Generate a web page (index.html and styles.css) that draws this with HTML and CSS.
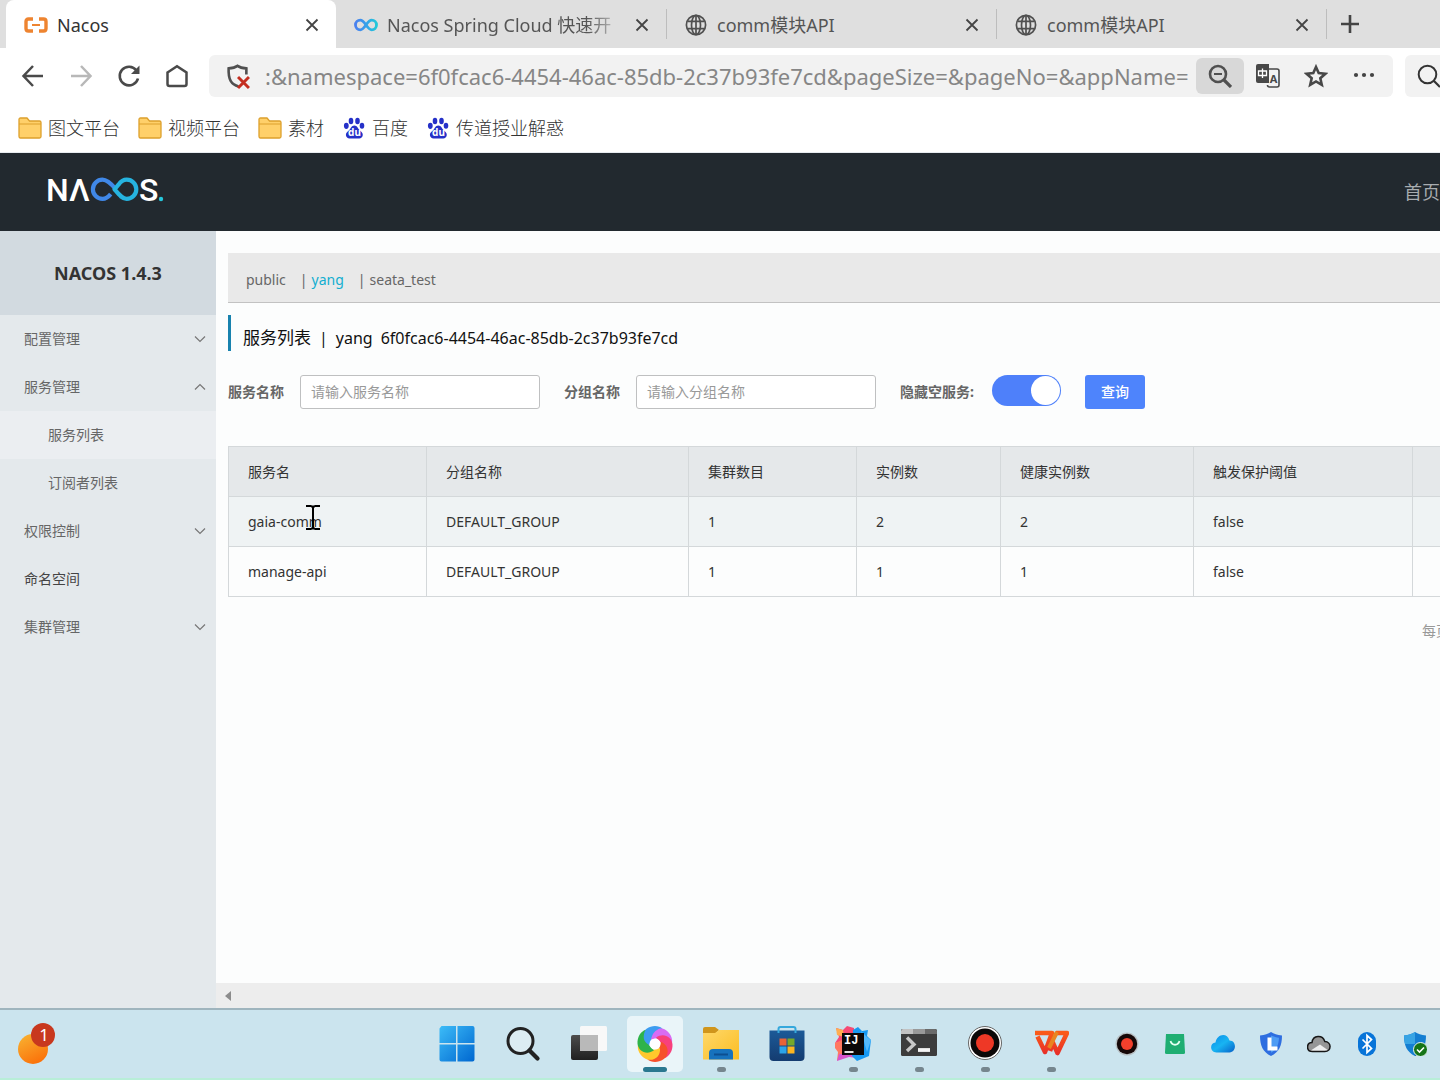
FILE: index.html
```html
<!DOCTYPE html>
<html lang="zh-CN">
<head>
<meta charset="utf-8">
<title>Nacos</title>
<link rel="stylesheet" href="styles.css">
</head>
<body>
<svg class="defs" aria-hidden="true">
  <defs>
    <linearGradient id="loop" x1="0" x2="1" y1="0" y2="0"><stop offset="0" stop-color="#4a80ee"/><stop offset=".5" stop-color="#35a0ea"/><stop offset="1" stop-color="#22c8d8"/></linearGradient>
    <linearGradient id="win" x1="0" x2="1" y1="0" y2="1"><stop offset="0" stop-color="#3cbcf8"/><stop offset="1" stop-color="#0067d0"/></linearGradient>
    <linearGradient id="sun" x1=".2" x2=".7" y1="0" y2="1"><stop offset="0" stop-color="#f8b030"/><stop offset="1" stop-color="#fb6f08"/></linearGradient>
    <linearGradient id="gold" x1="0" x2="1" y1="0" y2="1"><stop offset="0" stop-color="#ffd86a"/><stop offset="1" stop-color="#fbbd22"/></linearGradient>
    <linearGradient id="dark" x1="0" x2="0" y1="0" y2="1"><stop offset="0" stop-color="#4c4c4c"/><stop offset="1" stop-color="#202020"/></linearGradient>
    <linearGradient id="bag" x1="0" x2="0" y1="0" y2="1"><stop offset="0" stop-color="#1c5a98"/><stop offset="1" stop-color="#143c70"/></linearGradient>
    <linearGradient id="sky" x1="0" x2="1" y1="0" y2="1"><stop offset="0" stop-color="#0a8ae8"/><stop offset=".5" stop-color="#18b4f2"/><stop offset="1" stop-color="#0860c8"/></linearGradient>
    <linearGradient id="wps" x1="0" x2="0" y1="0" y2="1"><stop offset="0" stop-color="#fa5a18"/><stop offset="1" stop-color="#e83028"/></linearGradient>
    <symbol id="close" viewBox="0 0 14 14"><path d="M1.500 1.500l11 11M12.500 1.500l-11 11" stroke="#444" stroke-width="1.800" fill="none"/></symbol>
    <symbol id="globe" viewBox="0 0 22 22"><g fill="none" stroke="#505050" stroke-width="1.700"><circle cx="11" cy="11" r="9.600"/><ellipse cx="11" cy="11" rx="4.500" ry="9.600"/><path d="M11 1.400v19.200M2.500 7.300h17M2.500 14.700h17"/></g></symbol>
    <symbol id="folder" viewBox="0 0 24 22"><path d="M1 19V2.500Q1 1 2.500 1H9l2.500 3H21.500Q23 4 23 5.500V19.500Q23 21 21.500 21H2.500Q1 21 1 19z" fill="#ffd06a" stroke="#dda02c" stroke-width="1.300"/><path d="M1 7h22" stroke="#dda02c"/></symbol>
    <symbol id="paw" viewBox="0 0 22 22"><g fill="#2530c8"><ellipse cx="8" cy="4" rx="2.300" ry="3.200"/><ellipse cx="14.500" cy="4" rx="2.300" ry="3.200"/><ellipse cx="3.300" cy="8.800" rx="2.400" ry="3.100"/><ellipse cx="19" cy="8.800" rx="2.300" ry="3"/><path d="M11.300 8.500c3 0 3.500 3 5.700 5 2 1.800 3.500 3.200 2.400 6-1.200 2.600-4.400 2-8 2s-7 .6-8.100-2c-1.200-2.800.5-4.300 2.500-6 2.100-1.900 2.600-5 5.500-5z"/></g><text x="11.500" y="19" text-anchor="middle" class="paw-text">du</text></symbol>
    <symbol id="down" viewBox="0 0 12 8"><path d="M1 1.500l5 5 5-5" fill="none" stroke="#777" stroke-width="1.200"/></symbol>
    <symbol id="up" viewBox="0 0 12 8"><path d="M1 6.500l5-5 5 5" fill="none" stroke="#777" stroke-width="1.200"/></symbol>
    <path id="blade" d="M-5-4C-6-13 2-18 9-15 15-12 18-6 17-1 13-7 8-9 3-6z"/>
  </defs>
</svg>

<div class="tabstrip">
  <div class="tab tab-active">
    <svg class="tab-icon" viewBox="0 0 24 18"><path d="M9 3H4.500Q2 3 2 5.500v7Q2 15 4.500 15H9M15 3h4.500Q22 3 22 5.500v7Q22 15 19.500 15H15" fill="none" stroke="#ee8430" stroke-width="3.400"/><path d="M8 9h8" stroke="#ee8430" stroke-width="2"/></svg>
    <span class="tab-title">Nacos</span>
    <button class="tab-close" aria-label="关闭"><svg><use href="#close"/></svg></button>
  </div>
  <div class="tab">
    <svg class="tab-icon" viewBox="0 0 24 18"><path d="M12 9C9.500 5.500 8.500 4.200 6.300 4.200a4.800 4.800 0 0 0 0 9.600C8.500 13.800 9.500 12.500 12 9s3.500-4.800 5.700-4.800a4.800 4.800 0 0 1 0 9.600C15.500 13.800 14.500 12.500 12 9z" fill="none" stroke="url(#loop)" stroke-width="2.800"/></svg>
    <span class="tab-title tab-fade">Nacos Spring Cloud 快速开</span>
    <button class="tab-close" aria-label="关闭"><svg><use href="#close"/></svg></button>
  </div>
  <div class="tab tab-line">
    <svg class="tab-icon globe"><use href="#globe"/></svg>
    <span class="tab-title">comm模块API</span>
    <button class="tab-close" aria-label="关闭"><svg><use href="#close"/></svg></button>
  </div>
  <div class="tab tab-line">
    <svg class="tab-icon globe"><use href="#globe"/></svg>
    <span class="tab-title">comm模块API</span>
    <button class="tab-close" aria-label="关闭"><svg><use href="#close"/></svg></button>
  </div>
  <button class="tab-new tab-line" aria-label="新建标签页"><svg viewBox="0 0 20 20"><path d="M10 1v18M1 10h18" stroke="#444" stroke-width="2.600"/></svg></button>
</div>

<div class="toolbar">
  <button class="tool" aria-label="后退"><svg viewBox="0 0 24 24"><path d="M22 12H3M12 2L2.500 12 12 22" fill="none" stroke="#4a4a4a" stroke-width="2.500"/></svg></button>
  <button class="tool" aria-label="前进"><svg viewBox="0 0 24 24"><path d="M2 12h19M12 2l9.500 10L12 22" fill="none" stroke="#b8b8b8" stroke-width="2.500"/></svg></button>
  <button class="tool" aria-label="刷新"><svg viewBox="0 0 24 24"><path d="M19.500 6.500A9.300 9.300 0 1 0 21 14.500" fill="none" stroke="#4a4a4a" stroke-width="2.600"/><path d="M22.500 1.500V10H14z" fill="#4a4a4a"/></svg></button>
  <button class="tool" aria-label="主页"><svg viewBox="0 0 24 24"><path d="M2.500 8.500L12 2.200l9.500 6.300V20q0 2-2 2h-15q-2 0-2-2z" fill="none" stroke="#4a4a4a" stroke-width="2.500"/></svg></button>
  <div class="address">
    <svg class="shield" viewBox="0 0 24 24"><path d="M13 21.500C6 19.500 3 15 3.500 4.200 8 4 10 3.300 12 1.800c2 1.500 4 2.200 8.500 2.400V10" fill="none" stroke="#505050" stroke-width="2.500"/><path d="M12.500 12.500l10.500 10.500M23 12.500L12.500 23" stroke="#c42e20" stroke-width="2.800"/></svg>
    <input class="url" type="text" aria-label="地址" value=":&amp;namespace=6f0fcac6-4454-46ac-85db-2c37b93fe7cd&amp;pageSize=&amp;pageNo=&amp;appName=">
    <button class="tool tool-on" aria-label="缩放"><svg viewBox="0 0 24 24"><circle cx="10" cy="10" r="8" fill="none" stroke="#505050" stroke-width="2.600"/><path d="M6 10h8" stroke="#505050" stroke-width="2"/><path d="M16 16l7 7" stroke="#505050" stroke-width="3.200"/></svg></button>
    <button class="tool" aria-label="翻译"><svg viewBox="0 0 24 24"><rect x="0" y="0" width="13" height="19" rx="2" fill="#484848"/><path d="M11.500 5H21q2 0 2 2v14q0 2-2 2h-7.500q-2 0-2-2" fill="#f2f2f2" stroke="#484848" stroke-width="1.600"/><path d="M11.500 0v19" stroke="#484848" stroke-width="3"/><path d="M2.500 7h8v4.500h-8zM6.500 4.500V14" fill="none" stroke="#fff" stroke-width="1.300"/><text x="17.500" y="19" text-anchor="middle" class="translate-text">A</text></svg></button>
    <button class="tool" aria-label="收藏"><svg viewBox="0 0 24 24"><path d="M12 3l2.700 6.100 6.600.7-5 4.400 1.500 6.600L12 17.400l-5.800 3.400 1.500-6.600-5-4.400 6.600-.7z" fill="none" stroke="#484848" stroke-width="2.600"/></svg></button>
    <button class="tool" aria-label="更多"><svg viewBox="0 0 24 24"><g fill="#444"><circle cx="4" cy="11" r="2.100"/><circle cx="12" cy="11" r="2.100"/><circle cx="20" cy="11" r="2.100"/></g></svg></button>
  </div>
  <button class="search-box" aria-label="搜索"><svg viewBox="0 0 24 24"><circle cx="10.500" cy="10.500" r="8.800" fill="none" stroke="#333" stroke-width="2"/><path d="M17 17l6 6" stroke="#333" stroke-width="2.200"/></svg></button>
</div>

<nav class="bookmarks">
  <a href="#"><svg><use href="#folder"/></svg>图文平台</a>
  <a href="#"><svg><use href="#folder"/></svg>视频平台</a>
  <a href="#"><svg><use href="#folder"/></svg>素材</a>
  <a href="#"><svg><use href="#paw"/></svg>百度</a>
  <a href="#"><svg><use href="#paw"/></svg>传道授业解惑</a>
</nav>

<header class="site-header">
  <svg class="logo" viewBox="0 3 118 30" role="img" aria-label="Nacos">
    <text x="-2" y="27" class="logo-text">N</text>
    <text x="21" y="27" class="logo-text">Λ</text>
    <path d="M68 15.300C63 9.500 59 5.700 54.500 5.700a9.600 9.600 0 0 0 0 19.200c3.500 0 6-2 8.200-4.700" fill="none" stroke="#4088e8" stroke-width="4.200"/>
    <path d="M66.500 15.300l4-4.600c2.500-3.500 5-5 8.200-5a9.600 9.600 0 0 1 0 19.200c-4.500 0-7.500-4-12.200-9.600z" fill="none" stroke="#26b4e0" stroke-width="4.200" stroke-linejoin="round"/>
    <text x="91" y="27" class="logo-text">S</text>
    <circle cx="113" cy="25" r="2.200" fill="#26c8dc"/>
  </svg>
  <a class="home-link" href="#">首页</a>
</header>

<div class="shell">
  <aside class="sidebar">
    <h1 class="version">NACOS 1.4.3</h1>
    <nav class="menu">
      <a href="#">配置管理<svg><use href="#down"/></svg></a>
      <a href="#">服务管理<svg><use href="#up"/></svg></a>
      <a class="sub current" href="#">服务列表</a>
      <a class="sub" href="#">订阅者列表</a>
      <a href="#">权限控制<svg><use href="#down"/></svg></a>
      <a class="plain" href="#">命名空间</a>
      <a href="#">集群管理<svg><use href="#down"/></svg></a>
    </nav>
  </aside>

  <main class="main">
    <div class="content">
      <nav class="namespaces">
        <a href="#">public</a>
        <span>|</span><a class="selected" href="#">yang</a>
        <span>|</span><a href="#">seata_test</a>
      </nav>
      <h2 class="heading">服务列表<span class="bar">|</span><span>yang</span><span>6f0fcac6-4454-46ac-85db-2c37b93fe7cd</span></h2>
      <form class="filters">
        <label for="service">服务名称</label><input class="field" id="service" type="text" placeholder="请输入服务名称">
        <label for="group">分组名称</label><input class="field" id="group" type="text" placeholder="请输入分组名称">
        <label class="wide" for="hide">隐藏空服务:</label><input class="switch" id="hide" type="checkbox" role="switch" checked>
        <button class="query" type="button">查询</button>
      </form>
      <table class="services">
        <colgroup><col class="c1"><col class="c2"><col class="c3"><col class="c4"><col class="c5"><col class="c6"><col></colgroup>
        <thead><tr><th>服务名</th><th>分组名称</th><th>集群数目</th><th>实例数</th><th>健康实例数</th><th>触发保护阈值</th><th></th></tr></thead>
        <tbody>
          <tr class="hover"><td><span class="pointed">gaia-comm<svg class="cursor" viewBox="0 0 14 25"><path d="M0 1h5.500M8.500 1H14M0 24h5.500M8.500 24H14M5 1.500h4M5 23.500h4M7 1.500v22" stroke="#000" stroke-width="2"/></svg></span></td><td>DEFAULT_GROUP</td><td>1</td><td>2</td><td>2</td><td>false</td><td></td></tr>
          <tr><td>manage-api</td><td>DEFAULT_GROUP</td><td>1</td><td>1</td><td>1</td><td>false</td><td></td></tr>
        </tbody>
      </table>
      <div class="pager">每页</div>
    </div>
    <div class="scrollbar"><svg viewBox="0 0 6 10"><path d="M6 0v10L0 5z" fill="#8c8c8c"/></svg></div>
  </main>
</div>

<footer class="taskbar">
  <div class="widget">
    <svg viewBox="0 0 40 44"><circle cx="15" cy="27" r="15" fill="url(#sun)"/><circle cx="25" cy="13" r="12" fill="#c8381e"/><text x="26" y="19" text-anchor="middle" class="badge-text">1</text></svg>
  </div>
  <div class="apps">
    <button aria-label="开始"><svg viewBox="0 0 36 36"><path d="M2.500 0H17v17H.5V2.500zM18.500 0h15q2 0 2 2v15h-17zM.5 18.500H17v17H2.500q-2 0-2-2zM18.500 18.500h17v15q0 2-2 2h-15z" fill="url(#win)"/></svg></button>
    <button aria-label="搜索"><svg viewBox="0 0 36 36"><circle cx="15.500" cy="15" r="12.500" fill="#dcecf2" stroke="#222" stroke-width="3"/><path d="M24.500 24.500l8 8" stroke="#222" stroke-width="4.200" stroke-linecap="round"/></svg></button>
    <button aria-label="任务视图"><svg viewBox="0 0 36 36"><rect y="9" width="27" height="25" rx="2" fill="url(#dark)"/><rect x="9" width="27" height="25" rx="1.500" fill="#f8f8f8"/><path d="M9 9h18v16H9z" fill="#b9b9b9"/></svg></button>
    <button class="front" aria-label="浏览器"><svg viewBox="-18 -18 36 36"><use href="#blade" transform="rotate(-60)" fill="#3d9cf0"/><use href="#blade" fill="#d86cf4"/><use href="#blade" transform="rotate(60)" fill="#f8407c"/><use href="#blade" transform="rotate(120)" fill="#f6502c"/><use href="#blade" transform="rotate(180)" fill="#ffc82c"/><use href="#blade" transform="rotate(240)" fill="#2eb34a"/><path d="M-11-8.500C-9-15-1-19 6-16 0-14-3-10-4-4-8-3-11-5-11-8.500z" fill="#3d9cf0"/><circle r="5.500" fill="#fff"/></svg></button>
    <button class="open" aria-label="文件资源管理器"><svg viewBox="0 0 36 36"><path d="M0 3Q0 1 2 1h10l4 3-4 4H0z" fill="#d0951c"/><path d="M0 7h12l4-3h20v29.500H0z" fill="url(#gold)"/><path d="M6 33.500V27q0-4 4-4h16q4 0 4 4v6.500z" fill="#1672bd"/><path d="M11 28.500h14" stroke="#0c4f90" stroke-width="2"/></svg></button>
    <button aria-label="应用商店"><svg viewBox="0 0 36 36"><path d="M.5 4.500h35V31q0 4-4 4h-27q-4 0-4-4z" fill="url(#bag)"/><path d="M9.500 7V3q0-2 2-2h13q2 0 2 2v4" fill="none" stroke="#35a8dc" stroke-width="2"/><path d="M10.500 12.500H17.500v7h-7z" fill="#e86336"/><path d="M18.500 12.500h7v7h-7z" fill="#76a82a"/><path d="M10.500 20.500h7v7h-7z" fill="#2ca4e8"/><path d="M18.500 20.500h7v7h-7z" fill="#fcb520"/></svg></button>
    <button class="open" aria-label="IntelliJ IDEA"><svg viewBox="0 0 36 36"><path d="M1 2l7 2 4-4 7 2v14H6L0 17l4-6z" fill="#f64a74"/><path d="M1 2l7 2 1 7-7-2z" fill="#ffad50"/><path d="M0 17l7-3v16l-5 5 1-9-3-4z" fill="#ff7860"/><path d="M4 28h20l-2 4-8-1-12 4z" fill="#d854cc"/><path d="M18 4l5-3 4 4 6-1-1 6 4 4-2 16-12 5-5-5z" fill="#1698f2"/><path d="M26 5l6 6 4 3-4 12z" fill="#54b8fa"/><rect x="7" y="7" width="22" height="22" fill="#0c0808"/><path d="M9.500 26h9" stroke="#fff" stroke-width="1.800"/><text x="9" y="18" class="ij-text">IJ</text></svg></button>
    <button class="open" aria-label="终端"><svg viewBox="0 0 36 36"><rect y="3" width="36" height="27" rx="1.500" fill="#3c3c3c"/><path d="M1.500 3H12v5H0V4.500z" fill="#c2c2c2"/><path d="M12 3h12v5H12z" fill="#999"/><path d="M24 3h10.500L36 4.500V8H24z" fill="#6a6a6a"/><path d="M6 11.500l7 7-7 6.500" fill="none" stroke="#c8c8c8" stroke-width="3.400"/><path d="M17 24h12" stroke="#f4f4f4" stroke-width="3.800"/></svg></button>
    <button class="open" aria-label="录屏"><svg viewBox="0 0 36 36"><circle cx="18" cy="17" r="16.500" fill="#fff" stroke="#666"/><circle cx="18" cy="17" r="14.500" fill="#0c0808"/><circle cx="18" cy="17" r="9" fill="#ee3826"/></svg></button>
    <button class="open" aria-label="WPS"><svg viewBox="0 0 36 36"><path d="M2 7h17L12 26 4.500 10.500M23 7h11L24.500 27 20 17l-3 8" fill="none" stroke="url(#wps)" stroke-width="4.600" stroke-linejoin="round"/><path d="M24 6l-8 16" stroke="#e98420" stroke-width="4"/></svg></button>
  </div>
  <div class="tray">
    <button aria-label="录制"><svg viewBox="0 0 24 24"><circle cx="12" cy="12" r="11.500" fill="#b8c0c4"/><circle cx="12" cy="12" r="10.200" fill="#160808"/><circle cx="12" cy="12" r="6" fill="#f2402c"/></svg></button>
    <button aria-label="手机助手"><svg viewBox="0 0 24 24"><path d="M3 2h18l1 18.500q0 1.500-1.500 1.500h-17Q2 22 2 20.500z" fill="#1fae72"/><path d="M7.500 9c1.500 5 7.500 5 9 0" fill="none" stroke="#e4fff0" stroke-width="1.800"/></svg></button>
    <button aria-label="云盘"><svg viewBox="0 0 24 24"><path d="M5.500 20.500C-1.500 20-1.500 11 4.500 10.500 6 2 16 0 18.500 8.500c7.500 0 7 12 0 12z" fill="url(#sky)"/></svg></button>
    <button aria-label="电脑管家"><svg viewBox="0 0 24 24"><path d="M1 3.500C6 3 9 2 12 0c3 2 6 3 11 3.500C23 14 20 20 12 24 4 20 1 14 1 3.500z" fill="#2e6ee0"/><path d="M12 3.500c3 1.300 5.500 2 8 2.300-.3 8-3 12.500-8 15z" fill="#4e9cf4"/><path d="M10.500 5.500v11h8" fill="none" stroke="#fff" stroke-width="4"/></svg></button>
    <button aria-label="OneDrive"><svg viewBox="0 0 24 24"><path d="M5.500 19.500C-1 19.500-1 11 5 10.500 6 3 15.500 2.500 17.800 9.500c7 .2 7 10 0 10z" fill="#969696"/><path d="M3 19l10-6.500 9 6.500z" fill="#eee"/><path d="M5.500 19.500C-1 19.500-1 11 5 10.500 6 3 15.500 2.500 17.800 9.500c7 .2 7 10 0 10z" fill="none" stroke="#161616" stroke-width="1.500"/></svg></button>
    <button aria-label="蓝牙"><svg viewBox="0 0 24 24"><rect x="3" width="18" height="24" rx="9" fill="#0874d8"/><path d="M7.500 7.500l9 9L12 20.500v-17l4.500 4-9 9" fill="none" stroke="#fff" stroke-width="1.700"/></svg></button>
    <button aria-label="安全中心"><svg viewBox="0 0 24 24"><path d="M1 3.500C6 3 9 2 12 0c3 2 6 3 11 3.500C23 14 20 20 12 24 4 20 1 14 1 3.500z" fill="#147ed2"/><path d="M1 3.500C6 3 9 2 12 0v12H2Q1 8 1 3.500z" fill="#38a4e4"/><path d="M12 12h10c-1.500 5.500-5 9.500-10 12z" fill="#0c5cae"/><circle cx="17.500" cy="17.500" r="7" fill="#157418" stroke="#e8f4f0"/><path d="M14 17.500l2.500 2.500 4.500-4.500" fill="none" stroke="#fff" stroke-width="1.600"/></svg></button>
  </div>
</footer>
</body>
</html>
```

FILE: styles.css
```css
* { box-sizing: border-box; }

body {
  margin: 0;
  min-height: 100vh;
  display: flex;
  flex-direction: column;
  overflow-x: hidden;
  background: #fff;
  color: #333;
  font: 14px/20px "Noto Sans", "Noto Sans CJK SC", sans-serif;
}

button, input { font: inherit; color: inherit; }
button { border: 0; padding: 0; background: none; }
a { color: inherit; text-decoration: none; }
svg { display: block; flex: none; }
.defs { position: absolute; width: 0; height: 0; }

/* Browser tabs */
.tabstrip {
  display: flex;
  height: 48px;
  padding-left: 6px;
  background: #dfdfdf;
}
.tab {
  flex: 0 1 330px;
  min-width: 0;
  display: flex;
  align-items: center;
  gap: 9px;
  padding: 2px 16px 0 18px;
  font-size: 18px;
  line-height: 24px;
  color: #555;
}
.tab-active { background: #fff; border-radius: 8px 8px 0 0; color: #333; }
.tab-line { background: linear-gradient(#bdbdbd, #bdbdbd) left center / 1px 30px no-repeat; }
.tab-icon { width: 24px; height: 18px; }
.globe { height: 22px; }
.tab-title { flex: 1; min-width: 0; overflow: hidden; white-space: nowrap; }
.tab-fade { -webkit-mask-image: linear-gradient(90deg, #000 84%, transparent); mask-image: linear-gradient(90deg, #000 84%, transparent); }
.tab-close { width: 16px; }
.tab-close svg { width: 14px; height: 14px; margin: auto; }
.tab-new { flex: none; width: 48px; }
.tab-new svg { width: 20px; height: 20px; margin: auto; }

/* Address row */
.toolbar {
  display: flex;
  align-items: center;
  height: 56px;
  padding-left: 9px;
}
.tool { width: 48px; height: 36px; flex: none; border-radius: 6px; }
.tool svg { width: 24px; height: 24px; margin: auto; }
.tool-on { background: #d8d8d8; }
.address {
  flex: 1;
  min-width: 0;
  display: flex;
  align-items: center;
  height: 42px;
  margin: 0 12px 0 8px;
  padding: 0 5px 0 16px;
  border-radius: 6px;
  background: #f2f2f2;
}
.shield { width: 25px; height: 25px; }
.url {
  flex: 1;
  min-width: 0;
  height: 36px;
  margin-left: 15px;
  padding: 0;
  border: 0;
  background: none;
  color: #868686;
  font-size: 22px;
}
.search-box {
  flex: none;
  width: 35px;
  height: 42px;
  padding-left: 12px;
  border-radius: 6px 0 0 6px;
  background: #f2f2f2;
  overflow: hidden;
}
.search-box svg { width: 24px; height: 24px; }

.bookmarks {
  display: flex;
  align-items: center;
  gap: 18px;
  height: 49px;
  padding-left: 18px;
  border-bottom: 1px solid #e8ecf0;
  font-size: 18px;
  font-weight: 300;
  line-height: 24px;
  color: #333;
}
.bookmarks a { display: flex; align-items: center; gap: 6px; }
.bookmarks svg { width: 24px; height: 22px; }
.paw-text { font: bold 10px "Noto Sans", sans-serif; fill: #fff; }
.translate-text { font: bold 11px "Noto Sans", sans-serif; fill: #484848; }

/* Console header */
.site-header {
  display: flex;
  align-items: center;
  justify-content: space-between;
  height: 78px;
  padding: 0 0 0 48px;
  background: #22292f;
}
.logo { width: 118px; height: 30px; overflow: visible; }
.logo-text { font: 500 32px Roboto, sans-serif; fill: #fff; }
.home-link { font-size: 18px; color: #a8acaf; }

.shell { flex: 1; display: flex; }
.sidebar { flex: none; width: 216px; background: #e4e9ec; }
.version {
  margin: 0;
  height: 84px;
  display: flex;
  align-items: center;
  justify-content: center;
  background: #d2dae0;
  font-size: 18px;
}
.menu a {
  display: flex;
  align-items: center;
  justify-content: space-between;
  height: 48px;
  padding: 0 10px 0 24px;
  color: #666;
}
.menu svg { width: 12px; height: 8px; }
.menu .sub { padding-left: 48px; }
.menu .current { background: #ebeef1; }
.menu .plain { color: #444; }

.main {
  flex: 1;
  min-width: 0;
  display: flex;
  flex-direction: column;
  background: #fcfdfd;
}
.content { flex: 1; padding: 22px 0 0 12px; overflow: hidden; }

.namespaces {
  display: flex;
  align-items: center;
  height: 50px;
  padding: 4px 18px 0;
  border-bottom: 1px solid #c2c2c2;
  background: #e9e9e9;
  color: #666;
}
.namespaces span { margin: 0 4px 0 14px; }
.namespaces .selected { color: #12aed0; }

.heading {
  display: flex;
  align-items: center;
  gap: 8px;
  height: 36px;
  margin: 12px 0 24px;
  padding: 10px 0 0 12px;
  border-left: 3px solid #1882ae;
  color: #111;
  font-size: 17px;
  font-weight: 400;
}
.heading span { font-size: 16px; }

.filters { display: flex; height: 34px; margin-bottom: 37px; }
.filters label { width: 72px; line-height: 34px; font-weight: 700; color: #666; }
.filters .wide { width: 92px; }
.field {
  width: 240px;
  margin-right: 24px;
  padding: 0 10px;
  border: 1px solid #bfc0c1;
  border-radius: 3px;
  background: #fff;
}
.field::placeholder { color: #999; }
.switch {
  appearance: none;
  width: 69px;
  height: 31px;
  margin: 0 24px 0 0;
  padding: 1px;
  border-radius: 16px;
  background: #4e80fa;
}
.switch::before {
  content: "";
  display: block;
  width: 29px;
  height: 29px;
  margin-left: auto;
  border-radius: 50%;
  background: #fff;
}
.query { width: 60px; border-radius: 3px; background: #4e84fc; color: #fff; font-weight: 500; }

.services {
  width: calc(100% + 40px);
  table-layout: fixed;
  border-collapse: collapse;
}
.services th, .services td {
  height: 50px;
  padding: 0 19px;
  border: 1px solid #d4d8da;
  text-align: left;
  font-weight: 400;
}
.services th { background: #e5e8ea; }
.services .hover { background: #eff3f4; }
.c1 { width: 198px; }
.c2 { width: 262px; }
.c3 { width: 168px; }
.c4 { width: 144px; }
.c5 { width: 193px; }
.c6 { width: 219px; }
.pointed { position: relative; }
.cursor { position: absolute; right: 2px; top: -7px; width: 14px; height: 25px; }
.pager { margin: 24px -10px 0 0; text-align: right; color: #999; }

.scrollbar {
  display: flex;
  align-items: center;
  height: 25px;
  padding-left: 9px;
  background: #ededed;
}
.scrollbar svg { width: 6px; height: 10px; }

/* Desktop taskbar */
.taskbar {
  display: flex;
  align-items: center;
  height: 72px;
  border-top: 2px solid #9fb5be;
  border-bottom: 2px solid #b8eed8;
  background: #cbe4ee;
}
.widget { flex: 1; padding-left: 18px; }
.widget svg { width: 40px; height: 44px; }
.badge-text { font: 17px "Noto Sans", sans-serif; fill: #fff; }
.ij-text { font: bold 12px "Liberation Mono", monospace; fill: #fff; }
.apps { display: flex; gap: 10px; }
.apps button { position: relative; width: 56px; height: 56px; border-radius: 5px; }
.apps svg { width: 36px; height: 36px; margin: auto; }
.apps .front { background: #eaf5f9; }
.apps .open::after, .apps .front::after {
  content: "";
  position: absolute;
  left: 50%;
  bottom: 0;
  width: 9px;
  height: 5px;
  margin-left: -4px;
  border-radius: 3px;
  background: #76868e;
}
.apps .front::after { width: 24px; margin-left: -12px; background: #2a7890; }
.tray { display: flex; margin: 0 1px 0 24px; }
.tray button { width: 48px; height: 48px; }
.tray svg { width: 24px; height: 24px; margin: auto; }
```
